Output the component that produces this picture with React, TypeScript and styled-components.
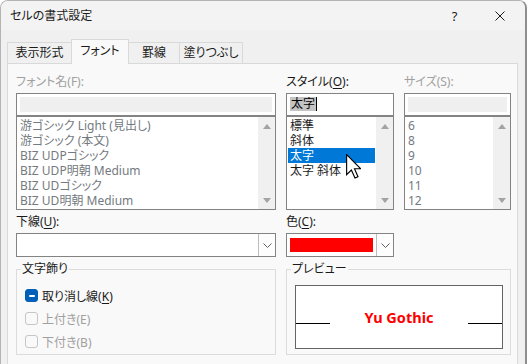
import React from "react";
import styled, { createGlobalStyle } from "styled-components";

const GlobalStyle = createGlobalStyle`
  html, body { margin: 0; padding: 0; background: #ffffff; }
  body {
    font-family: "Noto Sans", "Noto Sans CJK JP", sans-serif;
    font-size: 12px;
    font-feature-settings: "palt";
    color: #1a1a1a;
  }
`;

const Window = styled.div`
  position: relative;
  width: 527px;
  height: 364px;
  box-sizing: border-box;
  display: flex;
  flex-direction: column;
  background: #f0f0f0;
  border: 1px solid #b4b4b4;
  border-right: 2px solid #8e8e8e;
  border-bottom: none;
  border-radius: 8px 8px 0 0;
  overflow: hidden;
`;

const TitleBar = styled.div`
  height: 29px;
  flex: none;
  display: flex;
  align-items: center;
  padding: 0 3px 0 9px;
  background: #f3f3f3;
`;

const Title = styled.div`
  flex: 1;
  font-size: 12px;
  line-height: 16px;
`;

const TitleButton = styled.div`
  width: 45px;
  height: 29px;
  display: flex;
  align-items: center;
  justify-content: center;
  font-size: 13px;
  color: #1a1a1a;
`;

const TabRow = styled.div`
  height: 33px;
  flex: none;
  display: flex;
  align-items: flex-end;
  padding-left: 6px;
  position: relative;
  z-index: 1;
`;

const Tab = styled.div<{ $w: number; $active?: boolean }>`
  width: ${({ $w }) => $w}px;
  height: ${({ $active }) => ($active ? 25 : 21)}px;
  margin-bottom: ${({ $active }) => ($active ? -1 : 0)}px;
  box-sizing: border-box;
  display: flex;
  align-items: center;
  justify-content: center;
  padding-bottom: ${({ $active }) => ($active ? 2 : 0)}px;
  border: 1px solid #d9d9d9;
  border-bottom: none;
  background: ${({ $active }) => ($active ? "#f9f9f9" : "#f0f0f0")};
  font-size: 12px;
  line-height: 16px;
  & + & { margin-left: -1px; }
  position: relative;
  z-index: ${({ $active }) => ($active ? 2 : 1)};
`;

const Panel = styled.div`
  flex: 1;
  margin: 0 7px 0 6px;
  box-sizing: border-box;
  border: 1px solid #d9d9d9;
  border-bottom: none;
  background: #f9f9f9;
  padding: 10px 8px 0 8px;
`;

const FontGrid = styled.div`
  display: grid;
  grid-template-columns: 260px 108px 107px;
  column-gap: 10px;
`;

const LowerGrid = styled.div`
  display: grid;
  grid-template-columns: 260px 108px;
  column-gap: 10px;
  margin-top: 4px;
`;

const GroupGrid = styled.div`
  display: grid;
  grid-template-columns: 260px 225px;
  column-gap: 10px;
  margin-top: 4px;
`;

const Column = styled.div`
  display: flex;
  flex-direction: column;
`;

const Label = styled.div<{ $disabled?: boolean }>`
  height: 16px;
  line-height: 16px;
  margin-bottom: 3px;
  white-space: nowrap;
  color: ${({ $disabled }) => ($disabled ? "#a0a0a0" : "#1a1a1a")};
  u { text-underline-offset: 2px; }
`;

const TextBox = styled.div`
  height: 23px;
  box-sizing: border-box;
  border: 1px solid #838383;
  background: #ffffff;
  padding: 3px;
  display: flex;
  align-items: stretch;
`;

const DisabledFill = styled.div`
  flex: 1;
  background: #efefef;
`;

const Selected = styled.span`
  background: #c4c4c4;
  color: #000;
  line-height: 14px;
  height: 14px;
  padding: 0 1px;
  align-self: flex-start;
  border-right: 1px solid #000;
`;

const ListBox = styled.div`
  height: 94px;
  box-sizing: border-box;
  border: 1px solid #838383;
  background: #ffffff;
  display: flex;
`;

const Items = styled.div`
  flex: 1;
  padding: 1px;
  overflow: hidden;
`;

const Item = styled.div<{ $selected?: boolean; $disabled?: boolean }>`
  height: 15px;
  line-height: 15px;
  padding-left: 2px;
  white-space: nowrap;
  background: ${({ $selected }) => ($selected ? "#0078d7" : "transparent")};
  color: ${({ $selected, $disabled }) =>
    $selected ? "#ffffff" : $disabled ? "#747a80" : "#1a1a1a"};
`;

const ScrollBar = styled.div`
  width: 17px;
  flex: none;
  background: #f0f0f0;
  display: flex;
  flex-direction: column;
  justify-content: space-between;
  align-items: center;
  padding: 7px 0 6px;
  box-sizing: border-box;
`;

const Combo = styled.div`
  height: 24px;
  box-sizing: border-box;
  border: 1px solid #838383;
  background: #ffffff;
  display: flex;
`;

const ComboValue = styled.div`
  flex: 1;
  padding: 4px 3px 4px 3px;
  display: flex;
`;

const Swatch = styled.div<{ $color: string }>`
  flex: 1;
  background: ${({ $color }) => $color};
`;

const DropButton = styled.div`
  width: 16px;
  flex: none;
  border-left: 1px solid #bdbdbd;
  background: #fdfdfd;
  display: flex;
  align-items: center;
  justify-content: center;
`;

const Group = styled.fieldset<{ $h: number }>`
  margin: 0;
  padding: 0;
  min-width: 0;
  height: ${({ $h }) => $h}px;
  box-sizing: border-box;
  border: 1px solid #dcdcdc;
`;

const Legend = styled.legend`
  margin-left: 4px;
  padding: 0 1px;
  line-height: 16px;
  font-size: 12px;
  color: #1a1a1a;
`;

const CheckList = styled.div`
  padding: 7px 0 0 8px;
`;

const CheckRow = styled.div<{ $disabled?: boolean }>`
  height: 23px;
  display: flex;
  align-items: center;
  gap: 4px;
  color: ${({ $disabled }) => ($disabled ? "#a0a0a0" : "#1a1a1a")};
  u { text-underline-offset: 2px; }
`;

const Check = styled.span<{ $on?: boolean }>`
  width: 13px;
  height: 13px;
  flex: none;
  box-sizing: border-box;
  border-radius: 3px;
  display: flex;
  align-items: center;
  justify-content: center;
  background: ${({ $on }) => ($on ? "#005fb8" : "transparent")};
  border: 1px solid ${({ $on }) => ($on ? "#005fb8" : "#c6c6c6")};
  &::after {
    content: "";
    display: ${({ $on }) => ($on ? "block" : "none")};
    width: 6px;
    height: 2px;
    border-radius: 1px;
    background: #ffffff;
  }
`;

const PreviewWrap = styled.div`
  padding: 8px 7px 0 8px;
`;

const PreviewBox = styled.div`
  height: 64px;
  box-sizing: border-box;
  border: 1px solid #646464;
  background: #ffffff;
  display: flex;
  align-items: center;
  justify-content: space-between;
`;

const Rule = styled.div`
  width: 34px;
  height: 1px;
  background: #000;
  margin-top: 12px;
`;

const Sample = styled.div`
  color: #ff0000;
  font-weight: 700;
  font-size: 14.5px;
  line-height: 18px;
`;

const Cursor = styled.svg`
  position: absolute;
  left: 345px;
  top: 153px;
`;

const Arrow = ({ down }: { down?: boolean }) => (
  <svg width="8" height="5" viewBox="0 0 8 5">
    <path d={down ? "M0 0 L8 0 L4 5 Z" : "M0 5 L8 5 L4 0 Z"} fill="#a3a3a3" />
  </svg>
);

const Chevron = () => (
  <svg width="9" height="5" viewBox="0 0 9 5">
    <path d="M0.5 0.5 L4.5 4.5 L8.5 0.5" fill="none" stroke="#606060" strokeWidth="1" />
  </svg>
);

const fonts = [
  "游ゴシック Light (見出し)",
  "游ゴシック (本文)",
  "BIZ UDPゴシック",
  "BIZ UDP明朝 Medium",
  "BIZ UDゴシック",
  "BIZ UD明朝 Medium",
];
const styles = ["標準", "斜体", "太字", "太字 斜体"];
const sizes = ["6", "8", "9", "10", "11", "12"];

export default function App() {
  return (
    <>
      <GlobalStyle />
      <Window>
        <TitleBar>
          <Title>セルの書式設定</Title>
          <TitleButton>?</TitleButton>
          <TitleButton>
            <svg width="10" height="10" viewBox="0 0 10 10">
              <path d="M0.5 0.5 L9.5 9.5 M9.5 0.5 L0.5 9.5" stroke="#1a1a1a" strokeWidth="1" />
            </svg>
          </TitleButton>
        </TitleBar>

        <TabRow>
          <Tab $w={65}>表示形式</Tab>
          <Tab $w={58} $active>フォント</Tab>
          <Tab $w={52}>罫線</Tab>
          <Tab $w={64}>塗りつぶし</Tab>
        </TabRow>

        <Panel>
          <FontGrid>
            <Column>
              <Label $disabled>フォント名(F):</Label>
              <TextBox><DisabledFill /></TextBox>
              <ListBox>
                <Items>
                  {fonts.map((f) => (
                    <Item key={f} $disabled>{f}</Item>
                  ))}
                </Items>
                <ScrollBar><Arrow /><Arrow down /></ScrollBar>
              </ListBox>
            </Column>
            <Column>
              <Label>スタイル(<u>O</u>):</Label>
              <TextBox><Selected>太字</Selected></TextBox>
              <ListBox>
                <Items>
                  {styles.map((s) => (
                    <Item key={s} $selected={s === "太字"}>{s}</Item>
                  ))}
                </Items>
                <ScrollBar><Arrow /><Arrow down /></ScrollBar>
              </ListBox>
            </Column>
            <Column>
              <Label $disabled>サイズ(S):</Label>
              <TextBox><DisabledFill /></TextBox>
              <ListBox>
                <Items>
                  {sizes.map((s) => (
                    <Item key={s} $disabled>{s}</Item>
                  ))}
                </Items>
                <ScrollBar><Arrow /><Arrow down /></ScrollBar>
              </ListBox>
            </Column>
          </FontGrid>

          <LowerGrid>
            <Column>
              <Label>下線(<u>U</u>):</Label>
              <Combo>
                <ComboValue />
                <DropButton><Chevron /></DropButton>
              </Combo>
            </Column>
            <Column>
              <Label>色(<u>C</u>):</Label>
              <Combo>
                <ComboValue><Swatch $color="#ff0000" /></ComboValue>
                <DropButton><Chevron /></DropButton>
              </Combo>
            </Column>
          </LowerGrid>

          <GroupGrid>
            <Group $h={94}>
              <Legend>文字飾り</Legend>
              <CheckList>
                <CheckRow><Check $on /><span>取り消し線(<u>K</u>)</span></CheckRow>
                <CheckRow $disabled><Check /><span>上付き(E)</span></CheckRow>
                <CheckRow $disabled><Check /><span>下付き(B)</span></CheckRow>
              </CheckList>
            </Group>
            <Group $h={94}>
              <Legend>プレビュー</Legend>
              <PreviewWrap>
                <PreviewBox>
                  <Rule />
                  <Sample>Yu Gothic</Sample>
                  <Rule />
                </PreviewBox>
              </PreviewWrap>
            </Group>
          </GroupGrid>
        </Panel>

        <Cursor width="15" height="25" viewBox="0 0 12 20">
          <path
            d="M0.5 0.5 L0.5 16.5 L4.3 12.8 L7.2 19.2 L9.6 18.2 L6.8 11.8 L11.8 11.8 Z"
            fill="#ffffff"
            stroke="#000000"
            strokeWidth="0.9"
            strokeLinejoin="miter"
          />
        </Cursor>
      </Window>
    </>
  );
}
